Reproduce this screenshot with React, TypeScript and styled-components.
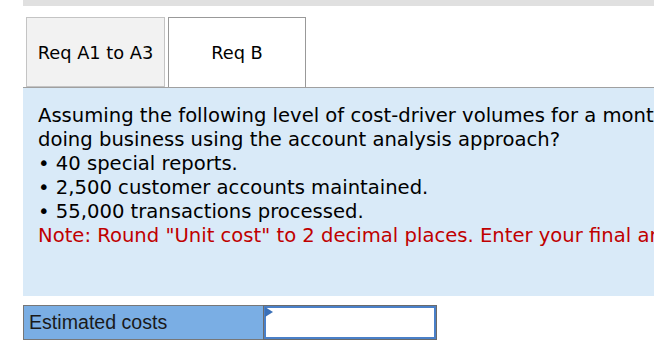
import styled, { createGlobalStyle } from "styled-components";

const GlobalStyle = createGlobalStyle`
  html, body {
    margin: 0;
    padding: 0;
    background: #fff;
    overflow: hidden;
  }
`;

const Page = styled.div`
  width: 654px;
  height: 355px;
  overflow: hidden;
  font-family: "DejaVu Sans", Verdana, sans-serif;
`;

const TopBar = styled.div`
  margin-left: 23px;
  height: 6px;
  background: #e0e0e0;
`;

const TabRow = styled.div`
  display: flex;
  gap: 3px;
  margin: 11px 0 0 23px;
  padding-left: 3px;
  border-bottom: 1px solid #a0a0a0;
`;

const Tab = styled.div<{ active?: boolean }>`
  box-sizing: border-box;
  width: ${(p) => (p.active ? 138 : 139)}px;
  height: 70px;
  margin-bottom: ${(p) => (p.active ? -1 : 0)}px;
  display: flex;
  align-items: center;
  justify-content: center;
  font-size: 17.8px;
  color: #000;
  background: ${(p) => (p.active ? "#fff" : "#f2f2f2")};
  border: 1px solid ${(p) => (p.active ? "#999" : "#c4c4c4")};
  border-bottom: ${(p) => (p.active ? "none" : "1px solid #c4c4c4")};
`;

const Panel = styled.div`
  margin-left: 23px;
  height: 208px;
  background: #d9eaf8;
  padding: 16px 0 0 15px;
  box-sizing: border-box;
  font-size: 19.6px;
  line-height: 24px;
  color: #000;
  white-space: nowrap;
  overflow: hidden;
`;

const Line = styled.div<{ note?: boolean }>`
  color: ${(p) => (p.note ? "#c00000" : "#000")};
`;

const CostRow = styled.div`
  display: flex;
  margin: 9px 0 0 23px;
  height: 35px;
`;

const CostLabel = styled.div`
  width: 240px;
  box-sizing: border-box;
  background: #7aaee4;
  border: 1px solid #777;
  border-right: none;
  display: flex;
  align-items: center;
  padding-left: 5px;
  font-family: "Liberation Sans", Arial, sans-serif;
  font-size: 19.6px;
  color: #1a1a1a;
`;

const CostInput = styled.div`
  position: relative;
  width: 174px;
  box-sizing: border-box;
  border: 1px solid #6b6b6b;
  background: #fff;
  &::before {
    content: "";
    position: absolute;
    inset: 0;
    border: 2px solid #4a80c8;
  }
`;

const Marker = styled.svg`
  position: absolute;
  left: 1px;
  top: 1px;
`;

export default function App() {
  return (
    <Page>
      <GlobalStyle />
      <TopBar />
      <TabRow>
        <Tab>Req A1 to A3</Tab>
        <Tab active>Req B</Tab>
      </TabRow>
      <Panel>
        <Line>
          Assuming the following level of cost-driver volumes for a month, what are the estimated costs of
        </Line>
        <Line>doing business using the account analysis approach?</Line>
        <Line>• 40 special reports.</Line>
        <Line>• 2,500 customer accounts maintained.</Line>
        <Line>• 55,000 transactions processed.</Line>
        <Line note>
          Note: Round "Unit cost" to 2 decimal places. Enter your final answer to the nearest whole dollar.
        </Line>
      </Panel>
      <CostRow>
        <CostLabel>Estimated costs</CostLabel>
        <CostInput>
          <Marker width="9" height="11" viewBox="0 0 9 11">
            <polygon points="0,0 8,5 0,10" fill="#3a70b8" />
          </Marker>
        </CostInput>
      </CostRow>
    </Page>
  );
}
